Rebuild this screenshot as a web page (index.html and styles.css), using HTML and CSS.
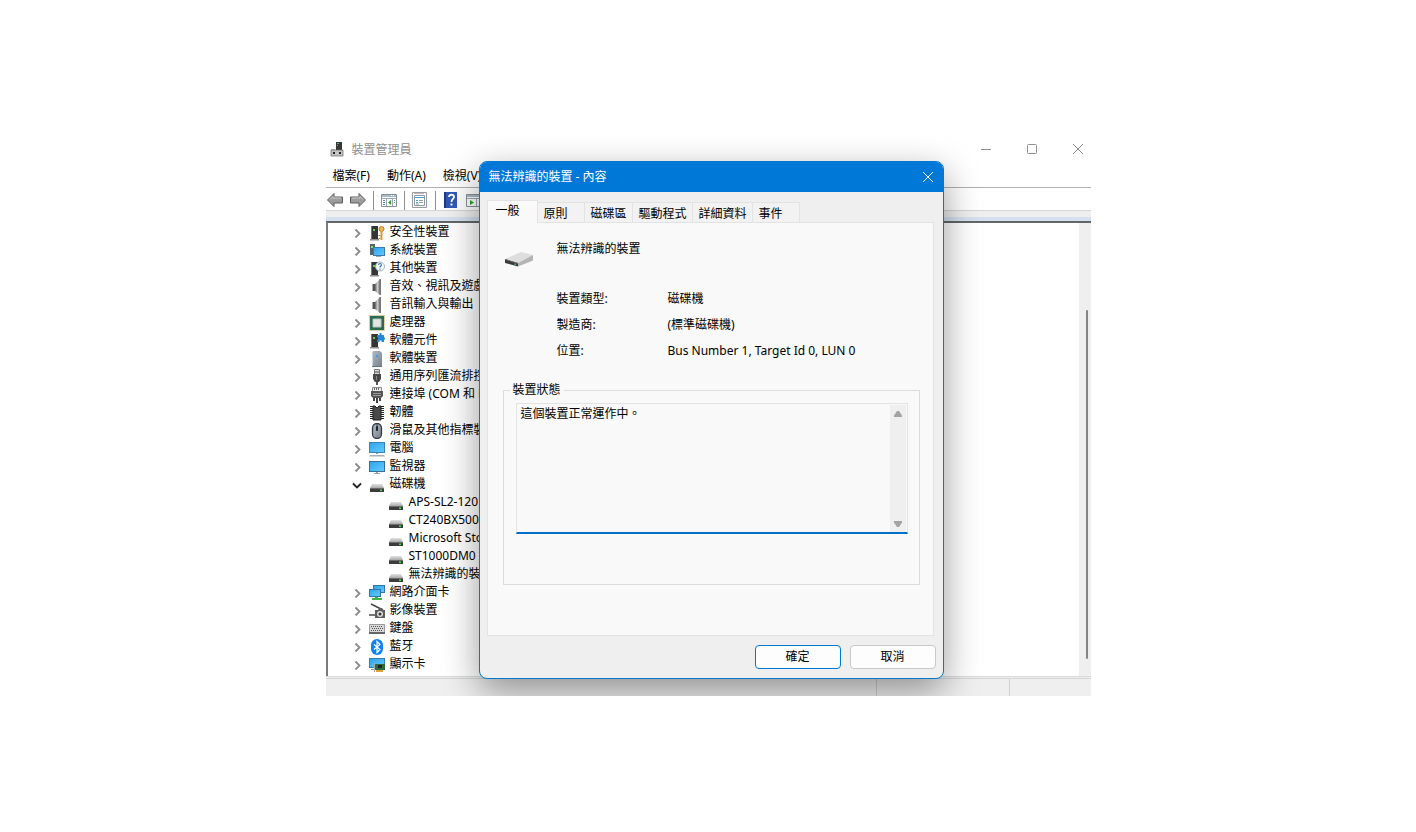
FILE: index.html
```html
<!DOCTYPE html>
<html lang="zh-Hant">
<head>
    <meta charset="UTF-8">
    <meta name="viewport" content="width=device-width, initial-scale=1.0">
    <title>裝置管理員</title>
    <link rel="stylesheet" href="styles.css">
</head>
<body>
    <!-- shared icons -->
    <svg class="sprite" aria-hidden="true">
        <defs>
            <linearGradient id="blue" x1="0" y1="0" x2="1" y2="1"><stop offset="0" stop-color="#2fa4ea"/><stop offset="1" stop-color="#62cbff"/></linearGradient>
            <linearGradient id="metal" x1="0" y1="0" x2="1" y2="0"><stop offset="0" stop-color="#666"/><stop offset="0.5" stop-color="#ccc"/><stop offset="1" stop-color="#777"/></linearGradient>
            <linearGradient id="steel" x1="0" y1="0" x2="1" y2="1"><stop offset="0" stop-color="#b3bac2"/><stop offset="1" stop-color="#77818c"/></linearGradient>
            <linearGradient id="top" x1="0" y1="0" x2="0" y2="1"><stop offset="0" stop-color="#e2e2e2"/><stop offset="1" stop-color="#a9a9a9"/></linearGradient>
        </defs>
        <symbol id="chevron" viewBox="0 0 10 10"><path d="M3.500 1.500l4 4-4 4" fill="none" stroke="#8a8a8a" stroke-width="1.800"/></symbol>
        <symbol id="chevron-down" viewBox="0 0 10 10"><path d="M1 3.500l4 4 4-4" fill="none" stroke="#222" stroke-width="1.800"/></symbol>
        <symbol id="disk" viewBox="0 0 16 16"><path d="M3 7h10l2 4H1z" fill="url(#top)"/><path d="M1 11h14v4H1z" fill="#3c3c3c"/><path d="M1 11h14v.8H1z" fill="#777"/><path d="M11 12.500h2v1.500h-2z" fill="#3be34b"/></symbol>
        <symbol id="tower" viewBox="0 0 16 16"><path d="M2 1h7v14H2z" fill="#353535"/><path d="M2 1h1v14H2z" fill="#777"/><path d="M4 4h2v2H4z" fill="#4be04b"/><path d="M1 14h9v1.500H1z" fill="#8d8d8d"/></symbol>
        <symbol id="speaker" viewBox="0 0 16 16"><path d="M3 5h3v7H3z" fill="#555"/><path d="M6 5l5-5v16l-5-4z" fill="url(#metal)"/><path d="M10.500 0h1.500v16h-1.500z" fill="#777"/><path d="M3 5h1v7H3z" fill="#aaa"/></symbol>
        <symbol id="monitor" viewBox="0 0 16 16"><path d="M0 2h16v11H0z" fill="#3b6f92"/><path d="M1 3h14v9H1z" fill="url(#blue)"/><path d="M7 13h2v1H7zM5 14h6v1H5z" fill="#98a4ad"/></symbol>
    </svg>

    <main class="manager">
        <header class="titlebar">
            <svg class="icon" viewBox="0 0 16 16"><path d="M6 1h6v8H6z" fill="#363636"/><path d="M7 2h2v1H7zM7 4h1v1H7z" fill="#59a7a7"/><path d="M1 9h12v6H1z" fill="#c4c4c4" stroke="#666" stroke-width=".7"/><path d="M3 11h2v2H3zM9 11h2v2H9z" fill="#222"/><path d="M1 8h4v1H1z" fill="#999"/></svg>
            <h1>裝置管理員</h1>
            <div class="window-buttons">
                <button aria-label="最小化"><svg viewBox="0 0 12 12"><path d="M1 6.500h10"/></svg></button>
                <button aria-label="最大化"><svg viewBox="0 0 12 12"><rect x="1.500" y="1.500" width="9" height="9" rx="1"/></svg></button>
                <button aria-label="關閉"><svg viewBox="0 0 12 12"><path d="M1 1l10 10M11 1L1 11"/></svg></button>
            </div>
        </header>

        <nav class="menu">
            <button>檔案(F)</button>
            <button>動作(A)</button>
            <button>檢視(V)</button>
        </nav>

        <div class="toolbar">
            <button aria-label="上一頁"><svg viewBox="0 0 16 16"><path d="M.5 8L7 1.500v3.500h8.500v6H7v3.500z" fill="#9c9c9c" stroke="#5e5e5e"/><path d="M3 7.500l3-3V6h8" fill="none" stroke="#c9c9c9"/></svg></button>
            <button aria-label="下一頁"><svg viewBox="0 0 16 16"><path d="M15.500 8L9 1.500v3.500H.5v6H9v3.500z" fill="#9c9c9c" stroke="#5e5e5e"/><path d="M2 6h8V4.500l3 3" fill="none" stroke="#c9c9c9"/></svg></button>
            <span class="divider"></span>
            <button aria-label="顯示主控台樹狀目錄"><svg viewBox="0 0 16 16"><path d="M.5 2.500h15v12H.5z" fill="#fff" stroke="#84909a"/><path d="M1 3h14v2H1z" fill="#a9b9c6"/><path d="M10 3h1v1h-1zM12 3h1v1h-1z" fill="#fff"/><path d="M1 6.500h14M5.500 7v7M11.500 7v7" stroke="#9ba8b2"/><path d="M2 8.500h2M2 10.500h2M2 12.500h2M13 8.500h1M13 10.500h1" stroke="#5c87ae"/><path d="M10 8v5L7 10.500z" fill="#2da12d"/></svg></button>
            <span class="divider"></span>
            <button aria-label="內容"><svg viewBox="0 0 16 16"><path d="M.5 .5h14v15H.5z" fill="#fafafa" stroke="#9a9a9a"/><path d="M2.500 3.500h10v10h-10z" fill="#fff" stroke="#8b9aa7"/><path d="M3 5.500h9M4 8.500h2M4 10.500h2" stroke="#4ca0cf"/><path d="M7 8.500h4M7 10.500h4M4 12h3" stroke="#999"/><path d="M2 1.500h10" stroke="#bbb"/></svg></button>
            <span class="divider"></span>
            <button aria-label="說明"><svg viewBox="0 0 16 16"><path d="M1 0h13v16H1z" fill="#3159b5"/><path d="M1 0h2v16H1z" fill="#1e3b87"/><path d="M6 5c0-3 5-3 5 0 0 2-2.500 2-2.500 5M7.500 12.500h2" fill="none" stroke="#fff" stroke-width="1.800"/></svg></button>
            <button aria-label="掃描硬體變更"><svg viewBox="0 0 16 16"><path d="M.5 2.500h15v12H.5z" fill="#fff" stroke="#84909a"/><path d="M1 3h14v2H1z" fill="#a9b9c6"/><path d="M1 6.500h14M10.500 7v7" stroke="#9ba8b2"/><path d="M4 8v5l4-2.500z" fill="#2da12d"/></svg></button>
        </div>

        <section class="workspace">
            <ul class="tree">
                <li><button class="twisty" aria-label="展開"><svg><use href="#chevron"/></svg></button><svg class="icon" viewBox="0 0 16 16"><use href="#tower" width="16" height="16"/><circle cx="12.500" cy="4" r="2.500" fill="#f2b24a" stroke="#c48121"/><path d="M11.500 6.500h2V15h-2z" fill="#d99a35"/><path d="M9.500 10h2v1h-2zM9.500 13h2v1h-2z" fill="#c48121"/></svg>安全性裝置</li>
                <li><button class="twisty" aria-label="展開"><svg><use href="#chevron"/></svg></button><svg class="icon" viewBox="0 0 16 16"><path d="M1 1h5v11H1z" fill="#56636c"/><path d="M2 3h2v2H2z" fill="#6ee36e"/><path d="M4 4h12v9H4z" fill="#397ca8"/><path d="M5 5h10v7H5z" fill="url(#blue)"/><path d="M7 13h5v1H7z" fill="#9aa"/></svg>系統裝置</li>
                <li><button class="twisty" aria-label="展開"><svg><use href="#chevron"/></svg></button><svg class="icon" viewBox="0 0 16 16"><use href="#tower" width="16" height="16"/><circle cx="11" cy="5.500" r="4.500" fill="#fff" stroke="#a5adb3"/><path d="M9.500 4c0-2 3-2 3 0 0 1.200-1.500 1-1.500 2.500M10.400 8.200h1.200" fill="none" stroke="#2d7fc1" stroke-width="1.200"/></svg>其他裝置</li>
                <li><button class="twisty" aria-label="展開"><svg><use href="#chevron"/></svg></button><svg class="icon"><use href="#speaker"/></svg>音效、視訊及遊戲控制器</li>
                <li><button class="twisty" aria-label="展開"><svg><use href="#chevron"/></svg></button><svg class="icon"><use href="#speaker"/></svg>音訊輸入與輸出</li>
                <li><button class="twisty" aria-label="展開"><svg><use href="#chevron"/></svg></button><svg class="icon" viewBox="0 0 16 16"><rect x=".5" y=".5" width="15" height="15" fill="none" stroke="#b6a45c" stroke-dasharray="1 1"/><path d="M1 1h14v14H1z" fill="#2e6a50"/><path d="M4 4h8v8H4z" fill="#e4e4e4" stroke="#b5c9be"/></svg>處理器</li>
                <li><button class="twisty" aria-label="展開"><svg><use href="#chevron"/></svg></button><svg class="icon" viewBox="0 0 16 16"><use href="#tower" width="16" height="16"/><path d="M8 2h2.500V0h2v2H15v2.500h1v2h-1V9h-2.500V7.500h-2V9H8V6.500h1v-2H8z" fill="#2389d6"/></svg>軟體元件</li>
                <li><button class="twisty" aria-label="展開"><svg><use href="#chevron"/></svg></button><svg class="icon" viewBox="0 0 16 16"><path d="M4 0h7l2 2v14H3V2z" fill="url(#steel)"/><path d="M3 2h1v14H3z" fill="#d0d5da"/><path d="M7 4h2v2H7z" fill="#35a0ee"/><path d="M3 15h10v1H3z" fill="#66717b"/></svg>軟體裝置</li>
                <li><button class="twisty" aria-label="展開"><svg><use href="#chevron"/></svg></button><svg class="icon" viewBox="0 0 16 16"><path d="M5.500 .5h5v5h-5z" fill="#ddd" stroke="#777"/><path d="M6.500 2h1v2h-1zM8.500 2h1v2h-1z" fill="#444"/><path d="M4 5h8v5l-2 3H6l-2-3z" fill="#474747"/><path d="M7 7h1v4H7z" fill="#888"/><path d="M7 13h2v3H7z" fill="#555"/></svg>通用序列匯流排控制器</li>
                <li><button class="twisty" aria-label="展開"><svg><use href="#chevron"/></svg></button><svg class="icon" viewBox="0 0 16 16"><path d="M3.500 .5h9v4h-9z" fill="#eee" stroke="#888"/><path d="M5.500 1v2M7.500 1v2M9.500 1v2" stroke="#666"/><path d="M2 4h12v5l-2 2H4L2 9z" fill="#555"/><path d="M4 6.500h8M4 8.500h8" stroke="#999"/><path d="M4 11h2v3H4zM10 11h2v3h-2zM7 11h2v5H7z" fill="#444"/></svg>連接埠 (COM 和 LPT)</li>
                <li><button class="twisty" aria-label="展開"><svg><use href="#chevron"/></svg></button><svg class="icon" viewBox="0 0 16 16"><path d="M2.500 1v14M13.500 1v14" stroke="#222" stroke-width="3" stroke-dasharray="1 1"/><path d="M4 1h2l2 2 2-2h2v14H4z" fill="#4a4a4a" stroke="#222"/></svg>韌體</li>
                <li><button class="twisty" aria-label="展開"><svg><use href="#chevron"/></svg></button><svg class="icon" viewBox="0 0 16 16"><rect x="3.500" y=".5" width="9" height="15" rx="4.500" fill="url(#steel)" stroke="#333b46" stroke-width="1.300"/><path d="M8 1v7" stroke="#444c58"/><rect x="7" y="3" width="2" height="5" rx="1" fill="#20262e"/></svg>滑鼠及其他指標裝置</li>
                <li><button class="twisty" aria-label="展開"><svg><use href="#chevron"/></svg></button><svg class="icon" viewBox="0 0 16 16"><path d="M0 1h16v11H0z" fill="#3685b6"/><path d="M1 2h14v9H1z" fill="url(#blue)"/><path d="M7 12h2v1H7z" fill="#999"/><path d="M1 14h14l1 1.500H0z" fill="#a7b0b7"/></svg>電腦</li>
                <li><button class="twisty" aria-label="展開"><svg><use href="#chevron"/></svg></button><svg class="icon"><use href="#monitor"/></svg>監視器</li>
                <li><button class="twisty" aria-label="摺疊"><svg><use href="#chevron-down"/></svg></button><svg class="icon"><use href="#disk"/></svg>磁碟機</li>
                <li class="child"><svg class="icon"><use href="#disk"/></svg>APS-SL2-120</li>
                <li class="child"><svg class="icon"><use href="#disk"/></svg>CT240BX500</li>
                <li class="child"><svg class="icon"><use href="#disk"/></svg>Microsoft Storage</li>
                <li class="child"><svg class="icon"><use href="#disk"/></svg>ST1000DM0</li>
                <li class="child"><svg class="icon"><use href="#disk"/></svg>無法辨識的裝置</li>
                <li><button class="twisty" aria-label="展開"><svg><use href="#chevron"/></svg></button><svg class="icon" viewBox="0 0 16 16"><path d="M4 0h12v8H4z" fill="#3077a5"/><path d="M5 1h10v6H5z" fill="url(#blue)"/><path d="M0 4h12v8H0z" fill="#3077a5"/><path d="M1 5h10v6H1z" fill="url(#blue)"/><path d="M6 12h3v1h4v2H3v-2h3z" fill="#41b349"/></svg>網路介面卡</li>
                <li><button class="twisty" aria-label="展開"><svg><use href="#chevron"/></svg></button><svg class="icon" viewBox="0 0 16 16"><path d="M2 1l12 6" stroke="#444" stroke-width="1.400"/><path d="M6 7h3l1-2h3l1 2h2v8H6z" fill="#5d5d5d"/><path d="M0 11h6v2H0z" fill="#777"/><circle cx="11" cy="11" r="3" fill="#ddd"/><circle cx="11" cy="11" r="1.500" fill="#333"/></svg>影像裝置</li>
                <li><button class="twisty" aria-label="展開"><svg><use href="#chevron"/></svg></button><svg class="icon" viewBox="0 0 16 16"><path d="M.5 3.500h15v8H.5z" fill="#d8d8d8" stroke="#9a9a9a"/><path d="M0 11h16v2H0z" fill="#666"/><path d="M2 5.500h12M2 9.500h12" stroke="#555" stroke-dasharray="1 1"/><path d="M3 7.500h11" stroke="#555" stroke-dasharray="1 1"/></svg>鍵盤</li>
                <li><button class="twisty" aria-label="展開"><svg><use href="#chevron"/></svg></button><svg class="icon" viewBox="0 0 16 16"><rect x="2" width="12" height="16" rx="6" fill="#0a84f5"/><path d="M5 5.500l6 5-3 3v-11l3 3-6 5" fill="none" stroke="#fff" stroke-width="1.200"/></svg>藍牙</li>
                <li><button class="twisty" aria-label="展開"><svg><use href="#chevron"/></svg></button><svg class="icon" viewBox="0 0 16 16"><path d="M0 1h16v10H0z" fill="#397ca8"/><path d="M1 2h14v8H1z" fill="url(#blue)"/><path d="M2 12h4v1H2z" fill="#999"/><path d="M6 7h10v6H6z" fill="#2e6a3d"/><path d="M9 8h4v3H9z" fill="#222"/><path d="M5 6h1v9H5z" fill="#aaa"/><path d="M7 13h7v2H7z" fill="#e0a53a"/></svg>顯示卡</li>
            </ul>
            <div class="scroll-track"><div class="scroll-thumb"></div></div>
        </section>

        <footer class="statusbar"><span></span><span></span><span></span></footer>

        <section class="dialog" role="dialog" aria-labelledby="dialog-title">
            <header class="dialog-title">
                <h2 id="dialog-title">無法辨識的裝置 - 內容</h2>
                <button aria-label="關閉"><svg viewBox="0 0 12 12"><path d="M1 1l10 10M11 1L1 11"/></svg></button>
            </header>

            <div class="dialog-body">
                <div class="tabs" role="tablist">
                    <button class="tab active" role="tab" aria-selected="true">一般</button>
                    <button class="tab" role="tab">原則</button>
                    <button class="tab" role="tab">磁碟區</button>
                    <button class="tab" role="tab">驅動程式</button>
                    <button class="tab" role="tab">詳細資料</button>
                    <button class="tab" role="tab">事件</button>
                </div>

                <div class="panel" role="tabpanel">
                    <div class="device">
                        <svg viewBox="0 0 30 18"><path d="M1 9L17 2l12 3-15 8z" fill="#dedede"/><path d="M14 13l15-8v5.500L14 16.500z" fill="#b4b4b4"/><path d="M1 9l13 4v3.500L1 13z" fill="#3b3b3b"/><path d="M1 9l13 4v.7L1 9.700z" fill="#777"/><path d="M10.500 13.500h1.500v1.500h-1.500z" fill="#2bbf83"/></svg>
                        <span>無法辨識的裝置</span>
                    </div>
                    <dl class="details">
                        <dt>裝置類型:</dt><dd>磁碟機</dd>
                        <dt>製造商:</dt><dd>(標準磁碟機)</dd>
                        <dt>位置:</dt><dd>Bus Number 1, Target Id 0, LUN 0</dd>
                    </dl>
                    <fieldset class="status">
                        <legend><label for="status-text">裝置狀態</label></legend>
                        <div class="status-box">
                            <textarea id="status-text" readonly>這個裝置正常運作中。</textarea>
                            <div class="status-scroll">
                                <svg viewBox="0 0 10 8"><path d="M4 1h2l3 4.500V7H1V5.500z"/></svg>
                                <svg viewBox="0 0 10 8"><path d="M4 7h2l3-4.500V1H1v1.500z"/></svg>
                            </div>
                        </div>
                    </fieldset>
                </div>

                <div class="actions">
                    <button class="btn primary">確定</button>
                    <button class="btn">取消</button>
                </div>
            </div>
        </section>
    </main>
</body>
</html>
```
FILE: styles.css
```css
* {
    box-sizing: border-box;
}

body, h1, h2, ul, dl, dd, fieldset, button, textarea {
    margin: 0;
    padding: 0;
    font-family: "Noto Sans", "Noto Sans CJK TC", sans-serif;
    font-size: 12px;
    font-weight: normal;
    line-height: 18px;
    color: #000;
}

body {
    min-height: 100vh;
    display: flex;
    align-items: center;
    justify-content: center;
    background: #fff;
}

button {
    border: none;
    background: none;
    white-space: nowrap;
}

svg {
    display: block;
}

.sprite {
    position: absolute;
    width: 0;
    height: 0;
}

.icon {
    width: 16px;
    height: 16px;
    flex: none;
}

/* device manager window */
.manager {
    position: relative;
    width: 100%;
    max-width: 765px;
    overflow: hidden;
    background: #fff;
}

.titlebar {
    display: flex;
    align-items: center;
    height: 26px;
    padding-left: 4px;
    gap: 6px;
}

.titlebar h1 {
    flex: 1;
    padding-top: 2px;
    color: #8f8f8f;
}

.window-buttons {
    display: flex;
    gap: 34px;
    padding-right: 7px;
}

.window-buttons svg {
    width: 12px;
    height: 12px;
    fill: none;
    stroke: #8f8f8f;
}

.menu {
    display: flex;
    gap: 17px;
    height: 26px;
    padding: 5px 7px 2px;
    border-bottom: 1px solid #adb0b2;
}

.toolbar {
    display: flex;
    align-items: center;
    gap: 7px;
    height: 23px;
    padding: 2px 1px 0;
    border-bottom: 1px solid #d5d5d5;
}

.toolbar button,
.toolbar svg {
    width: 16px;
    height: 16px;
}

.divider {
    width: 1px;
    height: 19px;
    background: #8f8f8f;
}

.workspace {
    display: flex;
    border-top: 6px solid #efefef;
    box-shadow: inset 0 4px #d5e1ef;
    padding-top: 4px;
}

.tree {
    flex: 1;
    list-style: none;
    padding: 1px 0 2px 24px;
    border-top: 2px solid #636669;
    border-left: 2px solid #7a7a7a;
}

.tree li {
    display: flex;
    align-items: center;
    gap: 5px;
    height: 18px;
    padding-bottom: 2px;
    white-space: nowrap;
}

.tree .icon,
.twisty {
    margin-top: 2px;
}

.tree .child {
    padding-left: 36px;
}

.twisty {
    width: 10px;
    margin-right: 2px;
}

.twisty svg {
    width: 10px;
    height: 10px;
}

.scroll-track {
    width: 12px;
    padding: 87px 3px 17px 7px;
    background: #efefef;
    border-top: 2px solid #636669;
}

.scroll-thumb {
    height: 100%;
    border-radius: 1px;
    background: #858585;
}

.statusbar {
    display: flex;
    height: 20px;
    border-top: 1px solid #d9d9d9;
    background: #efefef;
}

.statusbar span {
    margin-top: 1px;
    border-top: 1px solid #d5d5d5;
    border-left: 1px solid #d0d0d0;
    width: 82px;
}

.statusbar span:first-child {
    flex: 1;
    border-left: none;
}

.statusbar span:nth-child(2) {
    width: 133px;
}

/* properties dialog */
.dialog {
    position: absolute;
    top: 25px;
    left: 153px;
    right: 147px;
    overflow: hidden;
    border: 1px solid #0078d4;
    border-radius: 8px;
    background: #efefef;
    box-shadow: 0 12px 36px rgba(0, 0, 0, 0.4);
}

.dialog-title {
    display: flex;
    align-items: center;
    justify-content: space-between;
    height: 30px;
    padding: 0 9px;
    background: #0078d7;
}

.dialog-title h2 {
    color: #fff;
}

.dialog-title svg {
    width: 12px;
    height: 12px;
    fill: none;
    stroke: #fff;
}

.dialog-body {
    padding: 8px 7px 9px;
}

.tabs {
    display: flex;
    align-items: flex-end;
    height: 22px;
}

.tab {
    min-width: 47px;
    height: 20px;
    padding: 2px 5px 0 6px;
    text-align: left;
    border: 1px solid #e3e3e3;
    border-left: none;
    border-bottom: none;
    background: #f2f2f2;
}

.tab.active {
    width: 51px;
    height: 23px;
    margin-bottom: -1px;
    padding: 0 8px 2px;
    border-left: 1px solid #e3e3e3;
    background: #f9f9f9;
    z-index: 1;
}

.panel {
    height: 414px;
    margin-right: 2px;
    padding: 17px 13px 16px 15px;
    border: 1px solid #e3e3e3;
    background: #f9f9f9;
}

.device {
    display: flex;
    gap: 23px;
    padding: 0 1px;
}

.device svg {
    width: 30px;
    height: 18px;
    margin-top: 10px;
}

.details {
    display: grid;
    grid-template-columns: 111px 1fr;
    row-gap: 8px;
    margin: 22px 0 0 54px;
}

.status {
    min-height: 204px;
    margin-top: 21px;
    padding: 4px 11px 4px 12px;
    border: 1px solid #dcdcdc;
}

.status legend {
    margin-left: -6px;
    padding: 0 3px;
}

.status-box {
    display: flex;
    height: 131px;
    border: 1px solid #e3e3e3;
    border-bottom: 2px solid #0070c6;
}

.status-box textarea {
    flex: 1;
    padding: 1px 4px;
    border: none;
    outline: none;
    resize: none;
    background: #f9f9f9;
}

.status-scroll {
    display: flex;
    flex-direction: column;
    justify-content: space-between;
    align-items: center;
    width: 16px;
    margin: 1px 1px 0 0;
    padding: 5px 0 4px;
    background: #efefef;
}

.status-scroll svg {
    width: 10px;
    height: 8px;
    fill: #a3a3a3;
}

.actions {
    display: flex;
    justify-content: flex-end;
    gap: 9px;
    margin-top: 9px;
}

.btn {
    width: 86px;
    height: 24px;
    border: 1px solid #c8c8c8;
    border-radius: 4px;
    background: #fdfdfd;
}

.btn.primary {
    border-color: #0078d4;
}
```
